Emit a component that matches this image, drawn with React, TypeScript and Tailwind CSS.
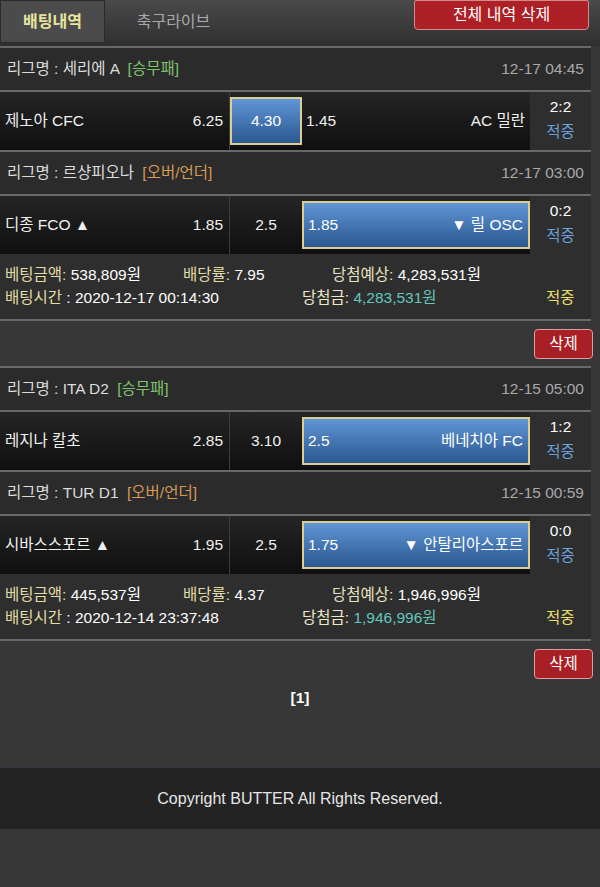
import React from "react";

type Bet = {
  league: string;
  type: "win" | "ou";
  time: string;
  home: string;
  homeOdds: string;
  mid: string;
  awayOdds: string;
  away: string;
  pick: "home" | "mid" | "away";
  score: string;
};

const font = { fontFamily: '"Liberation Sans", "Noto Sans CJK KR", sans-serif' };

function LeagueRow({ bet }: { bet: Bet }) {
  return (
    <div className="flex h-[42px] items-center justify-between bg-[#2b2b2b] px-[7px] text-[15.5px]">
      <p className="text-[#dcdcdc]">
        리그명 : {bet.league}{" "}
        {bet.type === "win" ? (
          <span className="ml-1 text-[#7fc26b]">[승무패]</span>
        ) : (
          <span className="ml-1 text-[#d59a55]">[오버/언더]</span>
        )}
      </p>
      <p className="text-[#a9a9a9]">{bet.time}</p>
    </div>
  );
}

function Cell({
  selected,
  className,
  children,
}: {
  selected: boolean;
  className: string;
  children: React.ReactNode;
}) {
  return (
    <div className="h-full bg-gradient-to-b from-[#252525] to-[#0f0f0f] py-[5px]">
      <div
        className={
          selected
            ? "flex h-full items-center border-2 border-[#d9cf95] bg-gradient-to-b from-[#6096d6] to-[#2b5890] text-white " + className
            : "flex h-full items-center text-[#f0f0f0] " + className
        }
      >
        {children}
      </div>
    </div>
  );
}

function MatchRow({ bet }: { bet: Bet }) {
  return (
    <div className="grid h-[58px] grid-cols-[229px_1px_72px_228px_61px] text-[15.5px]">
      <Cell selected={bet.pick === "home"} className="justify-between pl-[5px] pr-[6px]">
        <span>{bet.home}</span>
        <span>{bet.homeOdds}</span>
      </Cell>
      <div className="bg-[#3d3d3d]" />
      <Cell selected={bet.pick === "mid"} className="justify-center">
        <span>{bet.mid}</span>
      </Cell>
      <Cell selected={bet.pick === "away"} className="justify-between pl-[4px] pr-[5px]">
        <span>{bet.awayOdds}</span>
        <span>{bet.away}</span>
      </Cell>
      <div className="flex flex-col items-center justify-center gap-[3px] bg-[#2e2e2e] pb-[3px] leading-[22px]">
        <span className="text-white">{bet.score}</span>
        <span className="text-[#6d9fd9]">적중</span>
      </div>
    </div>
  );
}

function Info({
  amount,
  rate,
  expect,
  placed,
  win,
}: {
  amount: string;
  rate: string;
  expect: string;
  placed: string;
  win: string;
}) {
  return (
    <div className="flex h-[65px] flex-col justify-center gap-[1px] bg-[#2e2e2e] px-[5px] text-[15.5px] leading-[22px] text-white">
      <div className="flex">
        <span className="w-[178px]">
          <span className="text-[#e3dca6]">베팅금액:</span> {amount}
        </span>
        <span className="w-[149px]">
          <span className="text-[#e3dca6]">배당률:</span> {rate}
        </span>
        <span>
          <span className="text-[#e8e3c0]">당첨예상:</span> {expect}
        </span>
      </div>
      <div className="flex">
        <span className="w-[297px]">
          <span className="text-[#e3dca6]">배팅시간</span> : {placed}
        </span>
        <span className="w-[244px]">
          <span className="text-[#ece8cc]">당첨금:</span>{" "}
          <span className="text-[#62c7bd]">{win}</span>
        </span>
        <span className="text-[#e9df6a]">적중</span>
      </div>
    </div>
  );
}

function DeleteRow() {
  return (
    <div className="flex h-[45px] items-center justify-end">
      <button className="mr-[7px] h-[30px] w-[59px] rounded-[4px] border border-[#d8a0a0] bg-[#a81f25] text-[15.5px] text-white">
        삭제
      </button>
    </div>
  );
}

const line = "h-[2px] bg-[#686868]";

const bets: Bet[] = [
  {
    league: "세리에 A",
    type: "win",
    time: "12-17 04:45",
    home: "제노아 CFC",
    homeOdds: "6.25",
    mid: "4.30",
    awayOdds: "1.45",
    away: "AC 밀란",
    pick: "mid",
    score: "2:2",
  },
  {
    league: "르샹피오나",
    type: "ou",
    time: "12-17 03:00",
    home: "디종 FCO ▲",
    homeOdds: "1.85",
    mid: "2.5",
    awayOdds: "1.85",
    away: "▼ 릴 OSC",
    pick: "away",
    score: "0:2",
  },
  {
    league: "ITA D2",
    type: "win",
    time: "12-15 05:00",
    home: "레지나 칼초",
    homeOdds: "2.85",
    mid: "3.10",
    awayOdds: "2.5",
    away: "베네치아 FC",
    pick: "away",
    score: "1:2",
  },
  {
    league: "TUR D1",
    type: "ou",
    time: "12-15 00:59",
    home: "시바스스포르 ▲",
    homeOdds: "1.95",
    mid: "2.5",
    awayOdds: "1.75",
    away: "▼ 안탈리아스포르",
    pick: "away",
    score: "0:0",
  },
];

export default function App() {
  return (
    <div className="min-h-[887px] bg-[#373737]" style={font}>
      {/* Header tabs */}
      <div className="flex h-[46px] items-start bg-gradient-to-b from-[#4a4a4a] to-[#2f2f2f]">
        <div className="flex h-[43px] w-[105px] items-center justify-center border border-[#2a2a2a] bg-[#4b4b4b] text-[16px] font-bold text-[#e6e49e]">
          배팅내역
        </div>
        <div className="flex h-[43px] w-[137px] items-center justify-center text-[16px] text-[#a8a8a8]">
          축구라이브
        </div>
        <button className="ml-auto mr-[11px] h-[30px] w-[175px] rounded-b-[4px] rounded-t-[2px] border border-[#d28a8a] bg-[#ad2026] text-[16px] text-white">
          전체 내역 삭제
        </button>
      </div>

      <div className="w-[591px]">
        <div className={line} />
        <LeagueRow bet={bets[0]} />
        <div className={line} />
        <MatchRow bet={bets[0]} />
        <div className={line} />
        <LeagueRow bet={bets[1]} />
        <div className={line} />
        <MatchRow bet={bets[1]} />
        <Info
          amount="538,809원"
          rate="7.95"
          expect="4,283,531원"
          placed="2020-12-17 00:14:30"
          win="4,283,531원"
        />
        <div className={line} />
      </div>
      <DeleteRow />

      <div className="w-[591px]">
        <div className={line} />
        <LeagueRow bet={bets[2]} />
        <div className={line} />
        <MatchRow bet={bets[2]} />
        <div className={line} />
        <LeagueRow bet={bets[3]} />
        <div className={line} />
        <MatchRow bet={bets[3]} />
        <Info
          amount="445,537원"
          rate="4.37"
          expect="1,946,996원"
          placed="2020-12-14 23:37:48"
          win="1,946,996원"
        />
        <div className={line} />
      </div>
      <DeleteRow />

      {/* Pagination */}
      <p className="text-center text-[15.5px] font-bold text-white">[1]</p>

      {/* Footer */}
      <div className="mt-[58px] flex h-[63px] items-center justify-center border-y border-[#2e3640] bg-[#232323] text-[16px] text-[#e6e6e6]">
        Copyright BUTTER All Rights Reserved.
      </div>
    </div>
  );
}
